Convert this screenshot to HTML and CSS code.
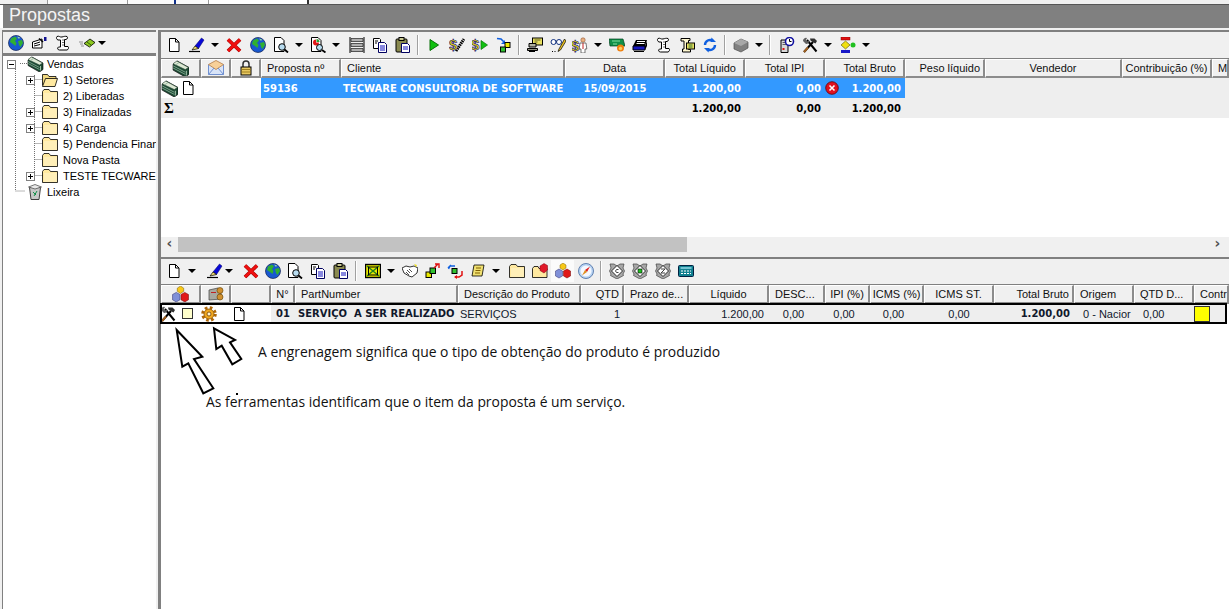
FILE: index.html
```html
<!DOCTYPE html>
<html lang="pt-BR">
<head>
    <meta charset="UTF-8">
    <title>Propostas</title>
    <link rel="stylesheet" href="styles.css">
</head>
<body>

<!-- icones usados nas barras -->
<svg class="defs" width="0" height="0">
    <symbol id="page" viewBox="0 0 16 16"><path d="M3.500 1.500h6l3.500 3.500v9.500H3.500z" fill="#fff" stroke="#000"/><path d="M9.500 1.500V5H13" fill="none" stroke="#000"/></symbol>
    <symbol id="pen" viewBox="0 0 16 16"><path d="M6 9 12.500 1 15 3 9.500 11.500z" fill="#0808d8" stroke="#000060" stroke-width=".5"/><path d="M6 9 3 13l6.500-1.500z" fill="#f4e070" stroke="#000" stroke-width=".7"/><path d="M0 14.500h11" stroke="#000" stroke-width="1.200"/></symbol>
    <symbol id="cross" viewBox="0 0 16 16"><path d="M2 2.500 14 14M14 2.500 2 14" stroke="#a00000" stroke-width="3.800"/><path d="M2 2.500 14 14M14 2.500 2 14" stroke="#f01010" stroke-width="2.600"/></symbol>
    <symbol id="globe" viewBox="0 0 16 16"><circle cx="8" cy="8" r="7.500" fill="#1858d0" stroke="#102050" stroke-width=".7"/><path d="M3 3.500 7 1.500l2 2-2 2.500 1.500 2-1 3L5 9 2 7zM10 6l4-1 1 3-2.500 4-1.500-2z" fill="#30b030"/><path d="M9 1.500l3 1-1 1.500z" fill="#a0e0a0"/></symbol>
    <symbol id="docmag" viewBox="0 0 16 16"><path d="M1.500.5h6.500l3 3v11H1.500z" fill="#fff" stroke="#000"/><circle cx="9" cy="10" r="3.300" fill="#b8dcf0" stroke="#000"/><path d="M11.500 12.500 15 15.500" stroke="#000" stroke-width="1.800"/></symbol>
    <symbol id="report" viewBox="0 0 16 16"><path d="M1.500.5h6.500l3 3v11H1.500z" fill="#fff" stroke="#000"/><path d="M6 2.500a3 3 0 1 0 3 3H6z" fill="#e01818"/><path d="M6.500 2a3 3 0 0 1 3 3h-3z" fill="#30a030"/><circle cx="9.500" cy="10.500" r="3" fill="#b8dcf0" stroke="#000"/><path d="M12 13 15.500 15.500" stroke="#000" stroke-width="1.800"/></symbol>
    <symbol id="stripes" viewBox="0 0 16 16"><path d="M1 0v16M15 0v16" stroke="#000"/><path d="M2 1.500h12v3H2zM2 6.500h12v3H2zM2 11.500h12v3H2z" fill="#b0b0b0" stroke="#000" stroke-width=".6"/></symbol>
    <symbol id="copy" viewBox="0 0 16 16"><path d="M1.500 1.500h6l1 1v9h-7z" fill="#fff" stroke="#000"/><path d="M6.500 5.500h6l2 2v8h-8z" fill="#fff" stroke="#000060"/><path d="M8 9h5M8 11h5M8 13h5" stroke="#1010c0"/><path d="M3 4h3M3 6h2" stroke="#000"/></symbol>
    <symbol id="paste" viewBox="0 0 16 16"><rect x="1" y="2" width="11" height="13" rx="1" fill="#8a8a50" stroke="#000"/><rect x="4" y=".5" width="5" height="3" fill="#c8c890" stroke="#000"/><path d="M6.500 6.500h6l2 2v7h-8z" fill="#fff" stroke="#000060"/><path d="M8 10h5M8 12h5" stroke="#1010c0"/></symbol>
    <symbol id="play" viewBox="0 0 16 16"><path d="M4 2.500 12.500 8 4 13.500z" fill="#10c010" stroke="#087008"/></symbol>
    <symbol id="hatch" viewBox="0 0 16 16"><path d="M7 14 15 2" stroke="#000" stroke-width="3" stroke-dasharray="1.500 .7"/></symbol>
    <symbol id="playsmall" viewBox="0 0 16 16"><path d="M9 3.500 15.500 8 9 12.500z" fill="#10c010" stroke="#087008" stroke-width=".7"/></symbol>
    <symbol id="swap" viewBox="0 0 16 16"><path d="M1 1.500 5 2 8 5" fill="none" stroke="#1060e0" stroke-width="1.600"/><path d="M9 3v4H5z" fill="#1060e0"/><rect x="9" y="5.500" width="5" height="5" fill="#e8e800" stroke="#000"/><rect x="4.500" y="10" width="5" height="5" fill="#30c030" stroke="#000"/></symbol>
    <symbol id="swapred" viewBox="0 0 16 16"><rect x="2" y="9" width="5.500" height="5.500" fill="#e8e800" stroke="#000"/><rect x="6" y="5" width="5.500" height="5.500" fill="#30c030" stroke="#000"/><path d="M10 5 14 1M11 1h4v4" fill="none" stroke="#e01010" stroke-width="1.400"/></symbol>
    <symbol id="swapboth" viewBox="0 0 16 16"><path d="M8 3H3l-1.500 3M4 2 1 5" fill="none" stroke="#1060e0" stroke-width="1.500"/><rect x="5" y="5.500" width="5" height="5" fill="#30c030" stroke="#000"/><path d="M15 8v4l-3 2H8" fill="none" stroke="#e01010" stroke-width="1.500"/><path d="M10 12v4l-3-2z" fill="#e01010"/></symbol>
    <symbol id="screen" viewBox="0 0 16 16"><rect x="5.500" y="1" width="10" height="7" fill="#e8e060" stroke="#000"/><path d="M7.500 3h6M7.500 5h3" stroke="#606020"/><path d="M2 6.500h7v3.500H2z" fill="#b0b0a0" stroke="#000"/><path d="M.5 11.500h10v2H.5zM2 14.500h6" fill="#909080" stroke="#000"/></symbol>
    <symbol id="glasses" viewBox="0 0 16 16"><circle cx="3.500" cy="5" r="2.500" fill="#fff" stroke="#103080"/><circle cx="9" cy="5" r="2.500" fill="#fff" stroke="#103080"/><path d="M6 4h.5M14.500 2 9 12l-1 2.500 2.500-1.500L16 4z" fill="#e8c020" stroke="#000" stroke-width=".7"/><path d="M2 14.500h1M4.500 14.500h1" stroke="#000"/></symbol>
    <symbol id="man" viewBox="0 0 16 16"><circle cx="11" cy="3" r="2.200" fill="#e8b080" stroke="#804020" stroke-width=".5"/><path d="M8 6h6l.8 6H13v4h-4v-4H7.200z" fill="#fff" stroke="#404040" stroke-width=".7"/><path d="M11 6v6" stroke="#c02020"/></symbol>
    <symbol id="bill" viewBox="0 0 16 16"><path d="M0 2h14l2 7H1z" fill="#109048" stroke="#004020" stroke-width=".7"/><path d="M3 4h8M4 7h4" stroke="#80e0a0"/><circle cx="11.500" cy="11" r="3.500" fill="#f08010"/><circle cx="11.500" cy="11.500" r="1.700" fill="#f8d060"/></symbol>
    <symbol id="leaf" viewBox="0 0 16 16"><path d="M0 7h4M1 9h3M2 11h3" stroke="#909090"/><path d="M5 8.500 11 4l5 3.500L10.500 12z" fill="#8cc820" stroke="#000" stroke-width=".8"/><path d="M8 7l4 3" stroke="#306000"/></symbol>
    <symbol id="form" viewBox="0 0 16 16"><path d="M1.500 7 11 4v9H1.500z" fill="#fff" stroke="#000"/><path d="M3 9l6-2M3 11l6-1.500" stroke="#000"/><path d="M8 3.500 12 7" stroke="#000" stroke-width="1.500"/><rect x="13" y="2" width="2.500" height="4" fill="#101090"/></symbol>
    <symbol id="printer" viewBox="0 0 16 16"><path d="M4 3h11l-2 6H1z" fill="#000"/><path d="M5 4.500h8M4.500 6.500h8" stroke="#fff"/><path d="M1 9h12v4H1z" fill="#1818c0" stroke="#000"/><path d="M13 9l2-5v5l-2 4z" fill="#000"/><path d="M2 14.500h10" stroke="#000"/></symbol>
    <symbol id="scroll" viewBox="0 0 16 16"><path d="M3 1.500C5 .5 6 2.500 8 2s3-1 5-.5c1 1 .5 2.500-1 3H10.500v7H14c1 1 .5 3-1 3.500H5.500c-2 0-2.500-2-1-3H6.500V5H4C2.500 4.500 2 2.500 3 1.500z" fill="#fff" stroke="#000"/><path d="M8 5h2M8 7.500h2M8 10h2" stroke="#707070"/></symbol>
    <symbol id="scrollbox" viewBox="0 0 16 16"><path d="M2 1.500h9v2H9.500v9h2v2.500H3.500v-3H5v-8H2z" fill="#fff8d0" stroke="#000"/><rect x="7.500" y="6" width="8" height="6" fill="#e8e060" stroke="#000"/><path d="M9.500 8h4M9.500 10h4" stroke="#307030"/></symbol>
    <symbol id="sync" viewBox="0 0 16 16"><path d="M3 8a5 5 0 0 1 8-4" fill="none" stroke="#1060e0" stroke-width="2.400"/><path d="M9.500.5 14 5H8.500z" fill="#1060e0"/><path d="M13 8a5 5 0 0 1-8 4" fill="none" stroke="#1060e0" stroke-width="2.400"/><path d="M6.500 15.500 2 11h5.500z" fill="#1060e0"/></symbol>
    <symbol id="block" viewBox="0 0 16 16"><path d="M1 6 8 2l7 3v6l-7 4-7-3z" fill="#808080" stroke="#505050" stroke-width=".7"/><path d="M1 6l7 3 7-4-7-3z" fill="#a8a8a8"/></symbol>
    <symbol id="tower" viewBox="0 0 16 16"><path d="M2 3h7v12.500H2z" fill="#d8d8d8" stroke="#000"/><path d="M3.500 5.500h4M3.500 7.500h4" stroke="#606060"/><rect x="3.500" y="11" width="2" height="2" fill="#e01010"/><circle cx="10.500" cy="4.500" r="4" fill="#fff" stroke="#1010a0" stroke-width="1.600"/><path d="M10.500 2v2.500h2" fill="none" stroke="#000"/></symbol>
    <symbol id="tools" viewBox="0 0 16 16"><path d="M2 15 11 5M5 3 14.500 14.500" stroke="#000" stroke-width="2"/><path d="M8 1.500h4.500L15 4l-1.500 2.500-3-1.500-2-1.500z" fill="#303030"/><path d="M1 4a3 3 0 0 1 4-3L4 3l1.500 1.500L7 3a3 3 0 0 1-3 4z" fill="#606060"/><path d="M2 15 6 10.500" stroke="#a06020" stroke-width="2"/></symbol>
    <symbol id="flow" viewBox="0 0 16 16"><rect x="1" y="0" width="9" height="3" fill="#e01010" stroke="#800000" stroke-width=".5"/><path d="M5.500 4 10 8l-4.500 4L1 8z" fill="#f0e010" stroke="#505000" stroke-width=".6"/><circle cx="13" cy="8" r="2.500" fill="#20c020"/><rect x="1" y="13" width="9" height="3" fill="#1818c8"/></symbol>
    <symbol id="money" viewBox="0 0 16 16"><path d="M5 1 16 7v6.500l-3.500 2.500L1 9.500V4z" fill="#1c4a34" stroke="#000" stroke-width=".6"/><path d="M4.500 1 15.500 7l-3 2L1 3.500z" fill="#dde8d4" stroke="#204030" stroke-width=".5"/><path d="M1 5.500 12.500 11.500M1 7.500 12.500 13.500M6.500 2.500 3.500 4.500" stroke="#8cb098" stroke-width=".8"/><path d="M13.500 10v4.500" stroke="#a0c0a8"/></symbol>
    <symbol id="mail" viewBox="0 0 16 16"><path d="M.5 4.500h15v10H.5z" fill="#d8e4f8" stroke="#7090d0"/><path d="M.5 4.500 8 .5l7.500 4L8 9.500z" fill="#f8d098" stroke="#c09060"/><path d="M.5 14.500 6 8M15.500 14.500 10 8" stroke="#7090d0"/></symbol>
    <symbol id="lock" viewBox="0 0 16 16"><path d="M5 7V4a3 3 0 0 1 6 0v3" fill="none" stroke="#303030" stroke-width="1.500"/><rect x="3" y="7" width="10" height="8" fill="#e8c860" stroke="#000"/><path d="M3.500 9.500h9M3.500 12h9" stroke="#a08020"/></symbol>
    <symbol id="trash" viewBox="0 0 16 16"><path d="M2.500 3.500h11l-1.500 12H4z" fill="#c8c8c8" stroke="#404040"/><path d="M1.500 3 8 .5 14.500 3 8 5z" fill="#e8e8e8" stroke="#404040" stroke-width=".7"/><path d="M6 8l3 3M10 7l-3 5" stroke="#109048"/></symbol>
    <symbol id="folder" viewBox="0 0 16 16"><path d="M.5 3.500 2 1.500h5l1.500 2h7v11H.5z" fill="#ffe9a0" stroke="#000" stroke-width=".8"/><path d="M2 5h13v9H2z" fill="#ffefb8"/></symbol>
    <symbol id="folderopen" viewBox="0 0 16 16"><path d="M.5 13.500v-11h5l1.500 2h7v2" fill="#f0d880" stroke="#000" stroke-width=".8"/><path d="M.5 14.500 3.500 6.500h12l-2.500 8z" fill="#ffe9a0" stroke="#000" stroke-width=".8"/></symbol>
    <symbol id="folderred" viewBox="0 0 16 16"><path d="M.5 5.500 2 3.500h4l1 2h8v9H.5z" fill="#ffe9a0" stroke="#000" stroke-width=".8"/><path d="M8 3l4-2.500 3.500 2V7L12 10 8 7.500z" fill="#e01828" stroke="#800010" stroke-width=".5"/></symbol>
    <symbol id="crate" viewBox="0 0 16 16"><rect x=".5" y="1.500" width="15" height="13" fill="#e8e800" stroke="#000" stroke-width="1.400"/><path d="M2 3l12 10M14 3 2 13" stroke="#208020" stroke-width="1.400"/><rect x="3.500" y="4" width="9" height="8" fill="none" stroke="#000"/></symbol>
    <symbol id="hands" viewBox="0 0 16 16"><path d="M0 5l4-2 4 1 4-1 4 2-1 5-5 4-3-1-5-3z" fill="#fff" stroke="#000" stroke-width=".8"/><path d="M5 7l3 3M7 6l3 3M4 9l3 3" stroke="#000" stroke-width=".7"/><path d="M12 1l3 1-1 2z" fill="#f0e010"/></symbol>
    <symbol id="tag" viewBox="0 0 16 16"><path d="M4 2h10l-2 11H2z" fill="#f0e070" stroke="#000" stroke-width=".8"/><path d="M6 5h5M5.500 7.500h5M5 10h5" stroke="#806000"/></symbol>
    <symbol id="cubes" viewBox="0 0 16 16"><path d="M8 0l3 2v3L8 7 5 5V2z" fill="#f8c818" stroke="#806000" stroke-width=".5"/><path d="M4 6l3.500 2v5L4 15 .5 13V8z" fill="#8090d8" stroke="#303070" stroke-width=".5"/><path d="M12 6l3.500 2v5L12 15l-3.500-2V8z" fill="#e01818" stroke="#700000" stroke-width=".5"/></symbol>
    <symbol id="compass" viewBox="0 0 16 16"><circle cx="8" cy="8" r="7.500" fill="#b8d4f4" stroke="#6080b0"/><circle cx="8" cy="8" r="5.500" fill="#f4f8ff"/><path d="M12 3.500 9 9 7 7z" fill="#e02020"/><path d="M4 12.500 7 7l2 2z" fill="#e09020"/></symbol>
    <symbol id="diamond-a" viewBox="0 0 16 16"><path d="M1 1h4l3 2 3-2h4l-1 4 1.500 3-1.500 3 .5 1.500-6.500 3.500-6.500-3.500.5-1.500L.5 8 2 5z" fill="#a8a8a8" stroke="#404040" stroke-width=".7"/><path d="M8 2.500 13.500 8 8 13.500 2.500 8z" fill="#fff" stroke="#000" stroke-width=".8"/><path d="M9.500 6.500h-2l-1 1.500 1 1.500h2" fill="none" stroke="#404040"/></symbol>
    <symbol id="diamond-b" viewBox="0 0 16 16"><path d="M1 1h4l3 2 3-2h4l-1 4 1.500 3-1.500 3 .5 1.500-6.500 3.500-6.500-3.500.5-1.500L.5 8 2 5z" fill="#a8a8a8" stroke="#404040" stroke-width=".7"/><path d="M8 2.500 13.500 8 8 13.500 2.500 8z" fill="#fff" stroke="#000" stroke-width=".8"/><rect x="6" y="6" width="4" height="4" fill="#20c020" stroke="#000" stroke-width=".6"/></symbol>
    <symbol id="diamond-c" viewBox="0 0 16 16"><path d="M1 1h4l3 2 3-2h4l-1 4 1.500 3-1.500 3 .5 1.500-6.500 3.500-6.500-3.500.5-1.500L.5 8 2 5z" fill="#a8a8a8" stroke="#404040" stroke-width=".7"/><path d="M8 2.500 13.500 8 8 13.500 2.500 8z" fill="#fff" stroke="#000" stroke-width=".8"/><path d="M6 6h4L6 10h4" fill="none" stroke="#404040"/></symbol>
    <symbol id="calc" viewBox="0 0 16 16"><rect x=".5" y="2.500" width="15" height="11" rx="1" fill="#108090" stroke="#002040"/><path d="M2.500 5h11" stroke="#a0e0f0" stroke-width="1.400"/><path d="M3 8h2M6 8h2M9 8h2M12 8h1M3 10.500h2M6 10.500h2M9 10.500h2M12 10.500h1" stroke="#fff" stroke-width="1.200"/></symbol>
    <symbol id="machine" viewBox="0 0 16 16"><path d="M1 4l9-2 3 2v9L1 14z" fill="#a8a8a0" stroke="#404040" stroke-width=".7"/><circle cx="12" cy="4.500" r="3" fill="#d09030" stroke="#604000" stroke-width=".6"/><circle cx="12" cy="11" r="3" fill="#d09030" stroke="#604000" stroke-width=".6"/><path d="M3 6.500h5" stroke="#c02020"/></symbol>
    <symbol id="gear" viewBox="0 0 16 16"><circle cx="8" cy="8" r="6.300" fill="none" stroke="#b06808" stroke-width="3" stroke-dasharray="2.600 2.350"/><circle cx="8" cy="8" r="5" fill="#f0a820" stroke="#8a5000" stroke-width=".8"/><circle cx="8" cy="8" r="2" fill="#fff4d0" stroke="#704000" stroke-width=".8"/></symbol>
    <symbol id="errdot" viewBox="0 0 14 14"><circle cx="7" cy="7" r="6.300" fill="#e01020" stroke="#600008" stroke-width=".8"/><path d="M4.500 4.500l5 5M9.500 4.500l-5 5" stroke="#fff" stroke-width="1.600"/></symbol>
</svg>

<div class="topstrip">
    <span class="strip-a"></span>
    <span class="strip-b"></span>
    <span class="strip-c"></span>
    <span class="strip-d"></span>
    <span class="strip-e"></span>
</div>

<h1 class="title">Propostas</h1>

<div class="main">
    <div class="left">
        <div class="toolbar toolbar-left">
            <span class="b"><svg class="ic"><use href="#globe"/></svg></span>
            <span class="b"><svg class="ic"><use href="#form"/></svg></span>
            <span class="b"><svg class="ic"><use href="#scroll"/></svg></span>
            <span class="b m2"><svg class="ic"><use href="#leaf"/></svg></span>
            <span class="c n3"></span>
        </div>

        <div class="tree">
            <svg class="tree-lines" width="60" height="145">
                <path d="M12.500 8V130M12.500 130H22M31.500 14V114M31.500 18.500H42M31.500 34.500H42M31.500 50.500H42M31.500 66.500H42M31.500 82.500H42M31.500 98.500H42M31.500 114.500H42M17 2.500H24" fill="none" stroke="#707070" stroke-dasharray="1 1"/>
            </svg>
            <div class="node root"><span class="tog minus"></span><svg class="ic"><use href="#money"/></svg><span>Vendas</span></div>
            <div class="node"><span class="tog plus"></span><svg class="ic"><use href="#folderopen"/></svg><span>1) Setores</span></div>
            <div class="node"><span class="tog none"></span><svg class="ic"><use href="#folder"/></svg><span>2) Liberadas</span></div>
            <div class="node"><span class="tog plus"></span><svg class="ic"><use href="#folder"/></svg><span>3) Finalizadas</span></div>
            <div class="node"><span class="tog plus"></span><svg class="ic"><use href="#folder"/></svg><span>4) Carga</span></div>
            <div class="node"><span class="tog none"></span><svg class="ic"><use href="#folder"/></svg><span>5) Pendencia Finan</span></div>
            <div class="node"><span class="tog none"></span><svg class="ic"><use href="#folder"/></svg><span>Nova Pasta</span></div>
            <div class="node"><span class="tog plus"></span><svg class="ic"><use href="#folder"/></svg><span>TESTE TECWARE</span></div>
            <div class="node root"><span class="tog none"></span><svg class="ic"><use href="#trash"/></svg><span>Lixeira</span></div>
        </div>
    </div>

    <div class="right">
        <div class="pane pane-top">
            <div class="toolbar">
                <span class="b"><svg class="ic"><use href="#page"/></svg></span>
                <span class="b"><svg class="ic"><use href="#pen"/></svg></span>
                <span class="c"></span>
                <span class="b"><svg class="ic"><use href="#cross"/></svg></span>
                <span class="b m1"><svg class="ic"><use href="#globe"/></svg></span>
                <span class="b"><svg class="ic"><use href="#docmag"/></svg></span>
                <span class="c"></span>
                <span class="b"><svg class="ic"><use href="#report"/></svg></span>
                <span class="c"></span>
                <span class="b m2"><svg class="ic"><use href="#stripes"/></svg></span>
                <span class="b"><svg class="ic"><use href="#copy"/></svg></span>
                <span class="b"><svg class="ic"><use href="#paste"/></svg></span>
                <span class="s"></span>
                <span class="b"><svg class="ic"><use href="#play"/></svg></span>
                <span class="b"><svg class="ic" viewBox="0 0 16 16"><use href="#hatch"/><text x="0" y="13" class="dollar">$</text></svg></span>
                <span class="b"><svg class="ic" viewBox="0 0 16 16"><text x="-1" y="13" class="dollar">$</text><use href="#playsmall"/></svg></span>
                <span class="b m1"><svg class="ic"><use href="#swap"/></svg></span>
                <span class="s"></span>
                <span class="b"><svg class="ic"><use href="#screen"/></svg></span>
                <span class="b"><svg class="ic"><use href="#glasses"/></svg></span>
                <span class="b n1"><svg class="ic" viewBox="0 0 16 16"><text x="-1" y="14" class="dollar">$</text><use href="#man"/></svg></span>
                <span class="c"></span>
                <span class="b"><svg class="ic"><use href="#bill"/></svg></span>
                <span class="b"><svg class="ic"><use href="#printer"/></svg></span>
                <span class="b"><svg class="ic"><use href="#scroll"/></svg></span>
                <span class="b m1"><svg class="ic"><use href="#scrollbox"/></svg></span>
                <span class="b"><svg class="ic"><use href="#sync"/></svg></span>
                <span class="s"></span>
                <span class="b"><svg class="ic"><use href="#block"/></svg></span>
                <span class="c"></span>
                <span class="s"></span>
                <span class="b m1"><svg class="ic"><use href="#tower"/></svg></span>
                <span class="b"><svg class="ic"><use href="#tools"/></svg></span>
                <span class="c"></span>
                <span class="b m1"><svg class="ic"><use href="#flow"/></svg></span>
                <span class="c"></span>
            </div>

            <div class="grid grid-prop head">
                <div class="th mid"><svg class="ic big"><use href="#money"/></svg></div>
                <div class="th mid"><svg class="ic"><use href="#mail"/></svg></div>
                <div class="th mid"><svg class="ic"><use href="#lock"/></svg></div>
                <div class="th">Proposta nº</div>
                <div class="th">Cliente</div>
                <div class="th mid">Data</div>
                <div class="th end pr9">Total Líquido</div>
                <div class="th mid">Total IPI</div>
                <div class="th end pr9">Total Bruto</div>
                <div class="th end">Peso líquido</div>
                <div class="th mid">Vendedor</div>
                <div class="th mid">Contribuição (%)</div>
                <div class="th">M</div>
            </div>

            <div class="grid grid-prop row row-sel">
                <div class="td first span3"><svg class="ic big"><use href="#money"/></svg><svg class="ic"><use href="#page"/></svg></div>
                <div class="td sel">59136</div>
                <div class="td sel">TECWARE CONSULTORIA DE SOFTWARE</div>
                <div class="td sel mid">15/09/2015</div>
                <div class="td sel end">1.200,00</div>
                <div class="td sel end">0,00</div>
                <div class="td sel end bruto"><svg class="err"><use href="#errdot"/></svg>1.200,00</div>
            </div>
            <div class="grid grid-prop row row-sum">
                <div class="td sigma span3">Σ</div>
                <div class="td"></div>
                <div class="td"></div>
                <div class="td"></div>
                <div class="td end">1.200,00</div>
                <div class="td end">0,00</div>
                <div class="td end">1.200,00</div>
            </div>

            <div class="list-fill"></div>

            <div class="hscroll">
                <span class="arrow">‹</span>
                <span class="thumb"></span>
                <span class="track"></span>
                <span class="arrow">›</span>
            </div>
            <div class="band"></div>
        </div>

        <div class="pane pane-bottom">
            <div class="toolbar toolbar-low">
                <span class="b"><svg class="ic"><use href="#page"/></svg></span>
                <span class="c"></span>
                <span class="b m4"><svg class="ic"><use href="#pen"/></svg></span>
                <span class="c n4"></span>
                <span class="b m3"><svg class="ic"><use href="#cross"/></svg></span>
                <span class="b n1"><svg class="ic"><use href="#globe"/></svg></span>
                <span class="b n1"><svg class="ic"><use href="#docmag"/></svg></span>
                <span class="b"><svg class="ic"><use href="#copy"/></svg></span>
                <span class="b"><svg class="ic"><use href="#paste"/></svg></span>
                <span class="s"></span>
                <span class="b m1"><svg class="ic"><use href="#crate"/></svg></span>
                <span class="c"></span>
                <span class="b"><svg class="ic"><use href="#hands"/></svg></span>
                <span class="b n1"><svg class="ic"><use href="#swapred"/></svg></span>
                <span class="b"><svg class="ic"><use href="#swapboth"/></svg></span>
                <span class="b"><svg class="ic"><use href="#tag"/></svg></span>
                <span class="c"></span>
                <span class="b m2"><svg class="ic"><use href="#folder"/></svg></span>
                <span class="b"><svg class="ic"><use href="#folderred"/></svg></span>
                <span class="b pressed"><svg class="ic"><use href="#cubes"/></svg></span>
                <span class="b"><svg class="ic"><use href="#compass"/></svg></span>
                <span class="s"></span>
                <span class="b"><svg class="ic"><use href="#diamond-a"/></svg></span>
                <span class="b"><svg class="ic"><use href="#diamond-b"/></svg></span>
                <span class="b"><svg class="ic"><use href="#diamond-c"/></svg></span>
                <span class="b"><svg class="ic"><use href="#calc"/></svg></span>
            </div>

            <div class="grid grid-item head">
                <div class="th mid"><svg class="ic big"><use href="#cubes"/></svg></div>
                <div class="th mid"><svg class="ic"><use href="#machine"/></svg></div>
                <div class="th"></div>
                <div class="th mid">N°</div>
                <div class="th">PartNumber</div>
                <div class="th">Descrição do Produto</div>
                <div class="th end">QTD</div>
                <div class="th">Prazo de...</div>
                <div class="th mid">Líquido</div>
                <div class="th">DESC...</div>
                <div class="th mid">IPI (%)</div>
                <div class="th mid">ICMS (%)</div>
                <div class="th mid">ICMS ST.</div>
                <div class="th end">Total Bruto</div>
                <div class="th">Origem</div>
                <div class="th">QTD D...</div>
                <div class="th">Contri</div>
            </div>

            <div class="grid grid-item row row-item">
                <div class="td icons span3">
                    <svg class="ic i-tools"><use href="#tools"/></svg>
                    <span class="check"></span>
                    <svg class="ic i-gear"><use href="#gear"/></svg>
                    <svg class="ic i-page"><use href="#page"/></svg>
                </div>
                <div class="td plain strong mid">01</div>
                <div class="td plain strong wide">SERVIÇO&nbsp; A SER REALIZADO</div>
                <div class="td plain">SERVIÇOS</div>
                <div class="td plain end">1</div>
                <div class="td plain"></div>
                <div class="td plain end pr5">1.200,00</div>
                <div class="td plain mid pr9">0,00</div>
                <div class="td plain mid pr9">0,00</div>
                <div class="td plain mid pr9">0,00</div>
                <div class="td plain mid">0,00</div>
                <div class="td plain strong end">1.200,00</div>
                <div class="td plain pad">0 - Nacior</div>
                <div class="td plain pad">0,00</div>
                <div class="td plain nopad"><span class="swatch"></span></div>
            </div>

            <!-- anotacoes feitas por cima da captura -->
            <svg class="arrows" width="100" height="80">
                <path d="M17.700 5 43.300 31.700 35 34 54.300 63.300 44.300 68.300 29.300 38.300 23.300 41.700z" fill="#fff" stroke="#000" stroke-width="2"/>
                <path d="M55 3.300 76 15 71 17.300 82.300 34 73.300 39.300 62.700 20.700 57.300 24z" fill="#fff" stroke="#000" stroke-width="2"/>
                <rect x="77" y="68" width="2" height="2" fill="#000"/>
            </svg>
            <p class="note note-gear">A engrenagem significa que o tipo de obtenção do produto é produzido</p>
            <p class="note note-tools">As ferramentas identificam que o item da proposta é um serviço.</p>
        </div>
    </div>
</div>

</body>
</html>
```

FILE: styles.css
```css
html, body { margin: 0; height: 609px; overflow: hidden; }
body { background: #fff; color: #000; font-family: "Liberation Sans", Arial, sans-serif; font-size: 11px; display: flex; flex-direction: column; }
.defs { position: absolute; }
.dollar { font-family: "Liberation Sans", sans-serif; font-weight: bold; font-size: 15px; fill: #f0e000; stroke: #101080; stroke-width: .6px; }

.topstrip { height: 4px; display: flex; background: #f0f0f0; border-bottom: 1px solid #555; flex: none; }
.topstrip span { display: block; height: 4px; border-right: 1px solid #9a9a9a; }
.strip-a { width: 47px; }
.strip-b { width: 79px; background: #fafafa; }
.strip-c { width: 46px; background: #fafafa; border-right: 2px solid #10308a !important; }
.strip-d { width: 32px; background: #fafafa; }
.strip-e { width: 98px; background: #fff; border-right: 2px solid #333 !important; }

.title { margin: 0 0 0 3px; height: 23px; flex: none; background: #808080; color: #f4f4f4; font: normal 18px/21px "Liberation Sans", sans-serif; padding-left: 6px; }

.main { flex: 1; display: flex; min-height: 0; background: #f0f0f0; padding-top: 2px; }

.left { width: 153px; margin-left: 2px; padding-right: 2px; flex: none; display: flex; flex-direction: column; border-left: 1px solid #808080; }
.right { flex: 1; min-width: 0; border-left: 3px solid #808080; display: flex; flex-direction: column; }

.toolbar { display: flex; align-items: center; height: 26px; flex: none; background: #f0f0f0; border-top: 2px solid #808080; padding-left: 1px; }
.toolbar-left { height: 21px; border-bottom: 2px solid #808080; }
.toolbar-low { height: 23px; padding-bottom: 2px; }

.b { width: 23px; height: 22px; flex: none; display: flex; align-items: center; justify-content: center; }
.c { width: 14px; height: 22px; flex: none; position: relative; }
.c::after { content: ""; position: absolute; left: 3px; top: 9px; border: 4px solid transparent; border-top: 4px solid #000; border-bottom: 0; }
.s { width: 8px; height: 22px; flex: none; position: relative; }
.s::after { content: ""; position: absolute; left: 3px; top: 1px; bottom: 1px; width: 1px; background: #a0a0a0; border-right: 1px solid #fff; }
.m1 { margin-left: 1px; }
.m2 { margin-left: 2px; }
.m3 { margin-left: 3px; }
.m4 { margin-left: 4px; }
.n1 { margin-left: -1px; }
.n3 { margin-left: -3px; }
.n4 { margin-left: -4px; }
.pressed { background: #fbfbfb; }

.ic { width: 16px; height: 16px; display: block; flex: none; }
.ic.big { width: 17px; height: 17px; }

.tree { flex: 1; background: #fff; position: relative; overflow: hidden; border-top: 1px solid #808080; }
.tree-lines { position: absolute; left: 0; top: 5px; }
.node { position: relative; height: 16px; display: flex; align-items: center; white-space: nowrap; padding-left: 23px; }
.node .ic { margin-right: 5px; }
.tog { width: 9px; height: 9px; margin-right: 7px; flex: none; box-sizing: border-box; position: relative; }
.tog.plus, .tog.minus { border: 1px solid #808080; background: #fff; }
.tog.plus::before, .tog.minus::before { content: ""; position: absolute; left: 1px; top: 3px; width: 5px; height: 1px; background: #000; }
.tog.plus::after { content: ""; position: absolute; left: 3px; top: 1px; width: 1px; height: 5px; background: #000; }
.node.root { padding-left: 4px; }
.node.root .tog { margin-right: 10px; }
.node.root .ic { margin: 0 3px 0 0; width: 18px; }

.pane { display: flex; flex-direction: column; }
.pane-top { height: 227px; flex: none; background: #fff; }
.pane-bottom { flex: 1; min-height: 0; background: #fff; position: relative; }

.grid { display: grid; flex: none; }
.grid-prop { grid-template-columns: 40px 30px 30px 80px 224px 100px 80px 80px 80px 80px 137px 90px 1fr; }
.grid-item { grid-template-columns: 40px 30px 40px 24px 163px 123px 43px 65px 80px 56px 45px 54px 70px 80px 60px 60px 1fr; }

.head { height: 20px; box-sizing: border-box; border-top: 1px solid #808080; background: #f0f0f0; }
.th { box-sizing: border-box; height: 19px; border-left: 1px solid #fff; border-top: 1px solid #fff; border-right: 2px solid #8c8c8c; border-bottom: 2px solid #8c8c8c; padding: 0 5px; display: flex; align-items: center; white-space: nowrap; overflow: hidden; background: #f0f0f0; color: #111; }
.th.mid { justify-content: center; padding: 0; }
.th.end { justify-content: flex-end; padding-right: 3px; padding-left: 0; }
.th.pr9 { padding-right: 7px; }

.row { height: 20px; }
.row-sel, .row-sum { background: #eee; font-weight: bold; font-family: "DejaVu Sans", sans-serif; font-size: 10px; }
.td { display: flex; align-items: center; padding: 0 2px; white-space: nowrap; overflow: hidden; min-width: 0; }
.td.mid { justify-content: center; }
.td.end { justify-content: flex-end; padding-right: 4px; }
.span3 { grid-column: span 3; }
.td.first { background: #fff; padding-left: 0; }
.td.first .ic + .ic { margin-left: 2px; }
.td.sel { background: #3399ff; color: #fff; }
.bruto { justify-content: space-between !important; padding-left: 0; }
.err { width: 14px; height: 14px; flex: none; }
.sigma { font: bold 15px "Liberation Serif", serif; padding-left: 3px; }

.list-fill { flex: 1; background: #fff; }
.hscroll { height: 15px; flex: none; display: flex; background: #f0f0f0; padding-right: 3px; }
.arrow { width: 17px; text-align: center; font: bold 14px/13px "DejaVu Sans", sans-serif; color: #505050; flex: none; }
.thumb { width: 509px; background: #c2c2c2; }
.track { flex: 1; }
.band { height: 5px; flex: none; background: #f0f0f0; }

.row-item { height: 21px; box-sizing: border-box; border: 2px solid #000; margin: -1px 0 0 -1px; width: 1067px; grid-template-columns: 40px 30px 39px 24px 163px 123px 43px 65px 80px 56px 45px 54px 70px 80px 60px 60px 1fr; }
.td.plain { background: #eee; color: #10182c; }
.strong { font-weight: bold; font-family: "DejaVu Sans", sans-serif; font-size: 10px; }
.td.wide { padding-left: 3px; }
.td.icons { background: #fff; padding: 0; }
.i-tools { margin-left: -2px; }
.check { width: 9px; height: 9px; border: 1px solid #333; background: #ffffcc; margin-left: 6px; flex: none; }
.i-gear { margin-left: 8px; }
.i-page { margin-left: 14px; }
.td.pad { padding-left: 9px; }
.td.end.pr5 { padding-right: 5px; }
.td.mid.pr9 { padding-right: 9px; }
.td.nopad { padding: 0; }
.swatch { display: block; width: 14px; height: 14px; background: #ffff00; border: 1px solid #333; }

.arrows { position: absolute; left: -2px; top: 68px; }
.note { position: absolute; margin: 0; font-family: "Open Sans", sans-serif; font-size: 13.900px; color: #111; white-space: nowrap; }
.note-gear { left: 97px; top: 85px; }
.note-tools { left: 45px; top: 135px; }
```
